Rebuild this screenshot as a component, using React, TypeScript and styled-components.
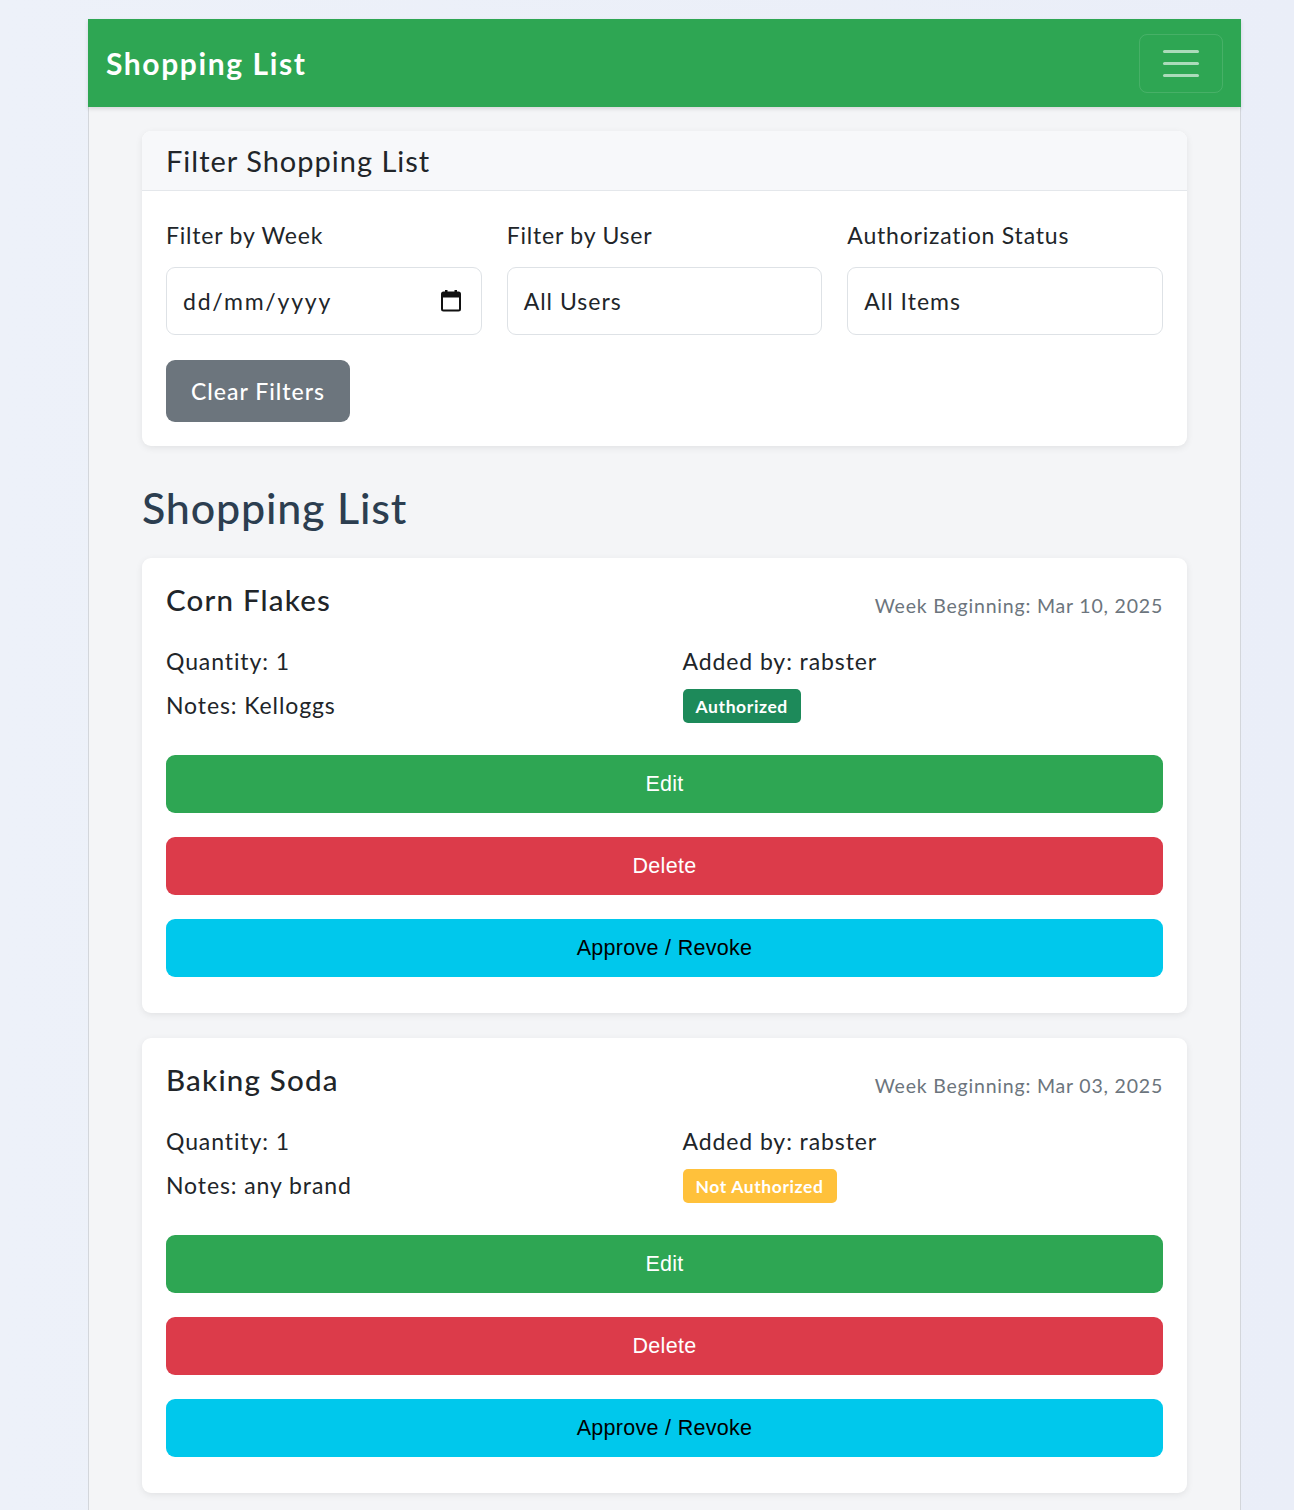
import React from "react";
import styled, { createGlobalStyle } from "styled-components";

const GlobalStyle = createGlobalStyle`
  html, body { margin: 0; padding: 0; }
  body {
    background: linear-gradient(90deg, #edf1f9 0%, #eaeef8 100%);
    font-family: "Lato", "Noto Sans", sans-serif;
    color: #212529;
    min-height: 1510px;
  }
  * { box-sizing: border-box; }
`;

const Shell = styled.div`
  margin: 19px 0 0 88px;
  width: 1153px;
  min-height: 1491px;
  background: #f4f5f7;
  border: 1px solid #d3d6db;
  border-bottom: none;
`;

const NavBar = styled.nav`
  height: 88px;
  background: #2ea653;
  display: flex;
  align-items: center;
  justify-content: space-between;
  padding: 0 18px 0 18px;
  box-shadow: 0 2px 4px rgba(0, 0, 0, 0.12);
  margin: -1px -1px 0 -1px;
`;

const Brand = styled.div`
  color: #fff;
  font-size: 30px;
  font-weight: 700;
  letter-spacing: 1.6px;
`;

const Toggler = styled.button`
  width: 84px;
  height: 59px;
  border: 1.5px solid rgba(255, 255, 255, 0.12);
  border-radius: 8px;
  background: transparent;
  display: flex;
  flex-direction: column;
  align-items: center;
  justify-content: center;
  gap: 9px;
  padding: 0;
`;

const TogglerLine = styled.span`
  display: block;
  width: 36px;
  height: 3px;
  border-radius: 2px;
  background: rgba(255, 255, 255, 0.6);
`;

const Content = styled.main`
  padding: 24px 53px 0 53px;
  display: flex;
  flex-direction: column;
`;

const Card = styled.section`
  background: #fff;
  border-radius: 9px;
  box-shadow: 0 2px 7px rgba(0, 0, 0, 0.08);
  overflow: hidden;
`;

const CardHeader = styled.div`
  height: 60px;
  background: #f7f8fa;
  border-bottom: 1px solid #e4e7eb;
  display: flex;
  align-items: center;
  padding: 0 24px;
  font-size: 29px;
  letter-spacing: 1px;
  font-weight: 400;
  color: #212529;
`;

const FilterBody = styled.div`
  padding: 28px 24px 24px 24px;
`;

const FilterGrid = styled.div`
  display: grid;
  grid-template-columns: repeat(3, 1fr);
  column-gap: 25px;
  margin-bottom: 25px;
`;

const Field = styled.div`
  display: flex;
  flex-direction: column;
`;

const Label = styled.label`
  font-size: 23px;
  letter-spacing: 0.8px;
  line-height: 33px;
  margin-bottom: 15px;
  color: #212529;
`;

const InputBox = styled.div`
  height: 68px;
  border: 1.5px solid #dee2e6;
  border-radius: 9px;
  background: #fff;
  display: flex;
  align-items: center;
  justify-content: space-between;
  padding: 0 20px 0 16px;
  font-size: 23px;
  letter-spacing: 1px;
  color: #212529;
`;

const DateText = styled.span`
  letter-spacing: 1.8px;
`;

const GreyButton = styled.button`
  width: 184px;
  height: 62px;
  background: #6c757d;
  border: none;
  border-radius: 9px;
  color: #fff;
  font-family: "Lato", "Noto Sans", sans-serif;
  font-size: 23px;
  letter-spacing: 1px;
  font-weight: 500;
  padding: 0;
`;

const PageTitle = styled.h2`
  margin: 34px 0 22px 0;
  font-size: 43px;
  letter-spacing: 0.8px;
  line-height: 56px;
  font-weight: 500;
  color: #2c3e50;
`;

const ItemCard = styled(Card)`
  padding: 24px 24px 36px 24px;
  margin-bottom: 25px;
`;

const ItemHeader = styled.div`
  display: flex;
  justify-content: space-between;
  align-items: flex-start;
  height: 36px;
  margin-bottom: 27px;
`;

const ItemTitle = styled.h5`
  margin: 0;
  font-size: 29.5px;
  letter-spacing: 1.2px;
  line-height: 36px;
  font-weight: 500;
  color: #212529;
`;

const WeekText = styled.small`
  font-size: 19.5px;
  letter-spacing: 0.8px;
  line-height: 24px;
  margin-top: 12px;
  color: #6c757d;
`;

const InfoGrid = styled.div`
  display: grid;
  grid-template-columns: 1fr 1fr;
  column-gap: 36px;
  margin-bottom: 22px;
`;

const InfoCol = styled.div`
  display: flex;
  flex-direction: column;
  align-items: flex-start;
`;

const Info = styled.p`
  margin: 0 0 11px 0;
  font-size: 23px;
  letter-spacing: 0.9px;
  line-height: 33px;
`;

const Badge = styled.span<{ $tone: "success" | "warning" }>`
  display: inline-flex;
  align-items: center;
  height: 34px;
  padding: 0 13px;
  border-radius: 5px;
  font-size: 17.5px;
  letter-spacing: 0.6px;
  font-weight: 700;
  color: #fff;
  background: ${(p) => (p.$tone === "success" ? "#1d8a5a" : "#ffc13b")};
`;

const Actions = styled.div`
  display: flex;
  flex-direction: column;
  gap: 24px;
`;

const ActionButton = styled.button<{ $variant: "edit" | "delete" | "approve" }>`
  width: 100%;
  height: 58px;
  border: none;
  border-radius: 9px;
  font-family: "Liberation Sans", "Inter", sans-serif;
  font-size: 21.5px;
  letter-spacing: 0.3px;
  background: ${(p) =>
    p.$variant === "edit" ? "#2ea653" : p.$variant === "delete" ? "#dc3b4a" : "#00c8ec"};
  color: ${(p) => (p.$variant === "approve" ? "#000" : "#fff")};
`;

const CalendarIcon = () => (
  <svg width="20" height="22" viewBox="0 0 20 22" aria-hidden="true">
    <rect x="4" y="0" width="2.5" height="4" fill="#111" />
    <rect x="13.5" y="0" width="2.5" height="4" fill="#111" />
    <rect x="1" y="2.5" width="18" height="18" rx="1.5" fill="none" stroke="#111" strokeWidth="2" />
    <rect x="1" y="2.5" width="18" height="5" fill="#111" />
  </svg>
);

type Item = {
  name: string;
  week: string;
  qty: number;
  notes: string;
  user: string;
  authorized: boolean;
};

const items: Item[] = [
  { name: "Corn Flakes", week: "Mar 10, 2025", qty: 1, notes: "Kelloggs", user: "rabster", authorized: true },
  { name: "Baking Soda", week: "Mar 03, 2025", qty: 1, notes: "any brand", user: "rabster", authorized: false },
];

export default function App() {
  return (
    <>
      <GlobalStyle />
      <Shell>
        <NavBar>
          <Brand>Shopping List</Brand>
          <Toggler aria-label="Toggle navigation">
            <TogglerLine />
            <TogglerLine />
            <TogglerLine />
          </Toggler>
        </NavBar>
        <Content>
          <Card>
            <CardHeader>Filter Shopping List</CardHeader>
            <FilterBody>
              <FilterGrid>
                <Field>
                  <Label>Filter by Week</Label>
                  <InputBox>
                    <DateText>dd/mm/yyyy</DateText>
                    <CalendarIcon />
                  </InputBox>
                </Field>
                <Field>
                  <Label>Filter by User</Label>
                  <InputBox>All Users</InputBox>
                </Field>
                <Field>
                  <Label>Authorization Status</Label>
                  <InputBox>All Items</InputBox>
                </Field>
              </FilterGrid>
              <GreyButton>Clear Filters</GreyButton>
            </FilterBody>
          </Card>

          <PageTitle>Shopping List</PageTitle>

          {items.map((it) => (
            <ItemCard key={it.name}>
              <ItemHeader>
                <ItemTitle>{it.name}</ItemTitle>
                <WeekText>Week Beginning: {it.week}</WeekText>
              </ItemHeader>
              <InfoGrid>
                <InfoCol>
                  <Info>Quantity: {it.qty}</Info>
                  <Info>Notes: {it.notes}</Info>
                </InfoCol>
                <InfoCol>
                  <Info>Added by: {it.user}</Info>
                  <Badge $tone={it.authorized ? "success" : "warning"}>
                    {it.authorized ? "Authorized" : "Not Authorized"}
                  </Badge>
                </InfoCol>
              </InfoGrid>
              <Actions>
                <ActionButton $variant="edit">Edit</ActionButton>
                <ActionButton $variant="delete">Delete</ActionButton>
                <ActionButton $variant="approve">Approve / Revoke</ActionButton>
              </Actions>
            </ItemCard>
          ))}
        </Content>
      </Shell>
    </>
  );
}
